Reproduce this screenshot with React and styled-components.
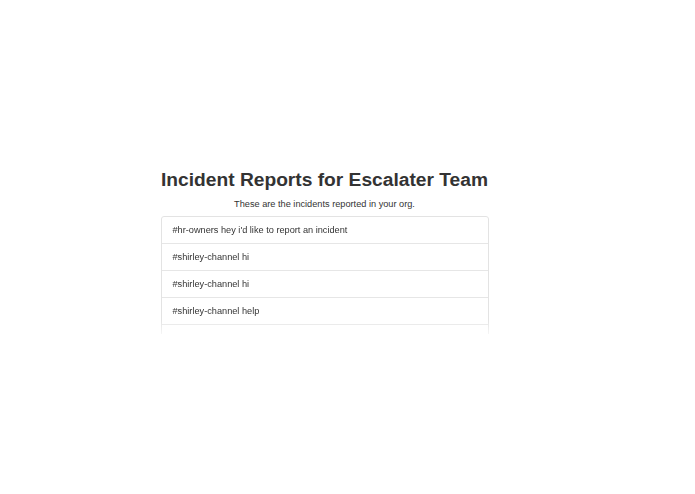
import React from 'react';
import styled, { createGlobalStyle } from 'styled-components';

const GlobalStyle = createGlobalStyle`
  html, body {
    margin: 0;
    padding: 0;
    background: #ffffff;
  }
  body {
    font-family: "Liberation Sans", Arial, sans-serif;
    color: #333333;
  }
`;

const Page = styled.div`
  width: 649px;
  display: flex;
  flex-direction: column;
  align-items: center;
  padding-top: 166px;
`;

const Title = styled.h1`
  margin: 0;
  font-size: 19.2px;
  font-weight: 700;
  color: #333333;
  line-height: 28px;
`;

const Subtitle = styled.p`
  margin: 3px 0 0;
  font-size: 9.2px;
  line-height: 14px;
  color: #333333;
`;

const ListFrame = styled.div`
  width: 328px;
  height: 118px;
  margin-top: 5px;
  overflow: hidden;
  box-sizing: border-box;
  -webkit-mask-image: linear-gradient(to bottom, #000 0, #000 104px, rgba(0, 0, 0, 0.35) 118px);
  mask-image: linear-gradient(to bottom, #000 0, #000 104px, rgba(0, 0, 0, 0.35) 118px);
`;

const List = styled.ul`
  list-style: none;
  margin: 0;
  padding: 0;
  border: 1px solid #e3e3e3;
  border-radius: 3px;
`;

const Item = styled.li`
  height: 26px;
  display: flex;
  align-items: center;
  padding: 0 11px;
  font-size: 9.2px;
  color: #333333;
  border-top: ${(p) => (p.$first ? 'none' : '1px solid #e6e6e6')};
`;

const incidents = [
  "#hr-owners hey i'd like to report an incident",
  '#shirley-channel hi',
  '#shirley-channel hi',
  '#shirley-channel help',
  '#shirley-channel test',
  '#shirley-channel hello',
];

export default function App() {
  return (
    <>
      <GlobalStyle />
      <Page>
        <Title>Incident Reports for Escalater Team</Title>
        <Subtitle>These are the incidents reported in your org.</Subtitle>
        <ListFrame>
          <List>
            {incidents.map((text, i) => (
              <Item key={i} $first={i === 0}>
                {text}
              </Item>
            ))}
          </List>
        </ListFrame>
      </Page>
    </>
  );
}
